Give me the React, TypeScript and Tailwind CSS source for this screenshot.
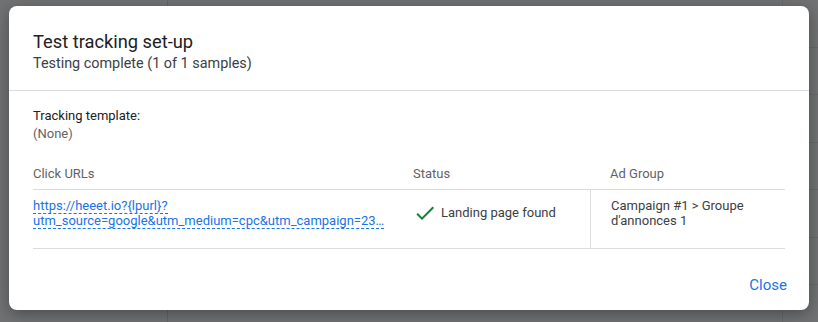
const rows = [0, 1, 2, 3, 4, 5, 6];

const CheckIcon = () => (
  <svg width="24" height="24" viewBox="0 0 24 24" className="shrink-0">
    <path
      d="M9 16.17 4.83 12l-1.42 1.41L9 19 21 7l-1.41-1.41z"
      fill="#188038"
    />
  </svg>
);

const App = () => {
  return (
    <div
      className="relative h-[322px] w-[818px] overflow-hidden bg-[#717273]"
      style={{ fontFamily: "Roboto, 'Liberation Sans', sans-serif" }}
    >
      {/* page behind the overlay */}
      <div className="flex h-full">
        <div className="w-[168px] shrink-0 border-r border-[#646566]" />
        <div className="flex flex-1 flex-col">
          <div className="flex flex-1">
            <div className="flex-1" />
            <div className="w-[36px] border-l border-[#696a6b]">
              {rows.map((row) => (
                <div key={row} className="h-[47.5px] border-b border-[#67686a]" />
              ))}
            </div>
          </div>
          <div className="flex h-[10px] items-start bg-[#6a6b6c]">
            <div className="flex-1 pl-[24px] text-[16px] font-medium leading-[20px] text-[#222]">
              Tracking
            </div>
            <div className="w-[36px] border-l border-[#5c5d5e] pl-[15px] text-[14px] leading-[20px] text-[#222]">
              Tra
            </div>
          </div>
        </div>
      </div>

      {/* dialog */}
      <div className="absolute left-[9px] top-[6px] flex h-[304px] w-[800px] flex-col rounded-[8px] bg-white shadow-[0_4px_16px_rgba(0,0,0,0.35)]">
        <div className="border-b border-[#dadce0] px-[24px] pb-[16px] pt-[24px]">
          <div className="text-[18.3px] leading-[24px] text-[#202124]">
            Test tracking set-up
          </div>
          <div className="text-[14.4px] leading-[20px] text-[#3c4043]">
            Testing complete (1 of 1 samples)
          </div>
        </div>

        <div className="flex-1 px-[24px] pt-[16px]">
          <div className="text-[13px] leading-[18px] text-[#202124]">
            Tracking template:
          </div>
          <div className="text-[13px] leading-[18px] text-[#5f6368]">
            (None)
          </div>

          <div className="mt-[22px] flex border-b border-[#dadce0] pb-[6px] text-[13px] leading-[18px] text-[#5f6368]">
            <div className="w-[360px] pr-[20px]">Click URLs</div>
            <div className="w-[197px] pl-[20px]">Status</div>
            <div className="flex-1 pl-[20px]">Ad Group</div>
          </div>

          <div className="flex h-[59px] border-b border-[#dadce0] text-[13px] text-[#3c4043]">
            <div className="w-[360px] pr-[6px] pt-[8px]">
              <a href="#" className="block leading-[15px] text-[#1a73e8]">
                <span className="border-b border-dashed border-[#1a73e8]">
                  https://heeet.io?{"{lpurl}"}?
                </span>
                <br />
                <span className="border-b border-dashed border-[#1a73e8]">
                  utm_source=google&amp;utm_medium=cpc&amp;utm_campaign=23…
                </span>
              </a>
            </div>
            <div className="flex w-[197px] items-center gap-[4px] pb-[12px] pl-[20px]">
              <CheckIcon />
              <span className="leading-[18px]">Landing page found</span>
            </div>
            <div className="flex-1 border-l border-[#dadce0] pl-[20px] pt-[8px] leading-[15px]">
              Campaign #1 &gt; Groupe
              <br />
              d'annonces 1
            </div>
          </div>
        </div>

        <div className="flex justify-end px-[22px] pb-[15px]">
          <button className="text-[15px] leading-[20px] text-[#1a73e8]">
            Close
          </button>
        </div>
      </div>
    </div>
  );
};

export default App;
